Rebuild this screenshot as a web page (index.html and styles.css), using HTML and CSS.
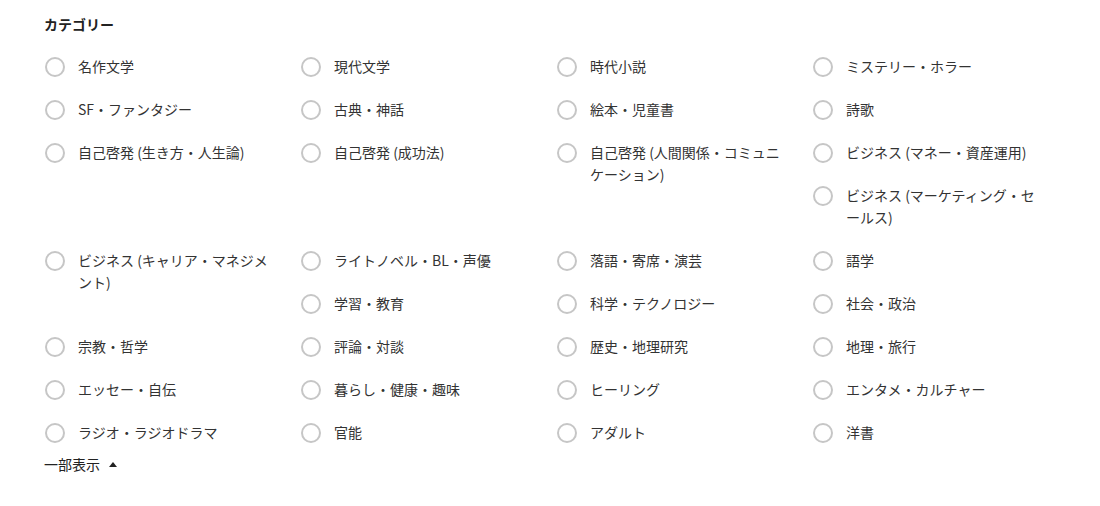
FILE: index.html
```html
<!DOCTYPE html>
<html lang="ja">
<head>
<meta charset="utf-8">
<link rel="stylesheet" href="styles.css">
</head>
<body>
<div class="filter">
  <h3 class="filter-title">カテゴリー</h3>
  <div class="options">
    <label class="item"><span class="radio"></span><span class="text">名作文学</span></label>
    <label class="item"><span class="radio"></span><span class="text">現代文学</span></label>
    <label class="item"><span class="radio"></span><span class="text">時代小説</span></label>
    <label class="item"><span class="radio"></span><span class="text">ミステリー・ホラー</span></label>
    <label class="item"><span class="radio"></span><span class="text">SF・ファンタジー</span></label>
    <label class="item"><span class="radio"></span><span class="text">古典・神話</span></label>
    <label class="item"><span class="radio"></span><span class="text">絵本・児童書</span></label>
    <label class="item"><span class="radio"></span><span class="text">詩歌</span></label>
    <label class="item"><span class="radio"></span><span class="text">自己啓発 (生き方・人生論)</span></label>
    <label class="item"><span class="radio"></span><span class="text">自己啓発 (成功法)</span></label>
    <label class="item"><span class="radio"></span><span class="text">自己啓発 (人間関係・コミュニケーション)</span></label>
    <label class="item"><span class="radio"></span><span class="text">ビジネス (マネー・資産運用)</span></label>
    <label class="item"><span class="radio"></span><span class="text">ビジネス (マーケティング・セールス)</span></label>
    <label class="item"><span class="radio"></span><span class="text">ビジネス (キャリア・マネジメント)</span></label>
    <label class="item"><span class="radio"></span><span class="text">ライトノベル・BL・声優</span></label>
    <label class="item"><span class="radio"></span><span class="text">落語・寄席・演芸</span></label>
    <label class="item"><span class="radio"></span><span class="text">語学</span></label>
    <label class="item"><span class="radio"></span><span class="text">学習・教育</span></label>
    <label class="item"><span class="radio"></span><span class="text">科学・テクノロジー</span></label>
    <label class="item"><span class="radio"></span><span class="text">社会・政治</span></label>
    <label class="item"><span class="radio"></span><span class="text">宗教・哲学</span></label>
    <label class="item"><span class="radio"></span><span class="text">評論・対談</span></label>
    <label class="item"><span class="radio"></span><span class="text">歴史・地理研究</span></label>
    <label class="item"><span class="radio"></span><span class="text">地理・旅行</span></label>
    <label class="item"><span class="radio"></span><span class="text">エッセー・自伝</span></label>
    <label class="item"><span class="radio"></span><span class="text">暮らし・健康・趣味</span></label>
    <label class="item"><span class="radio"></span><span class="text">ヒーリング</span></label>
    <label class="item"><span class="radio"></span><span class="text">エンタメ・カルチャー</span></label>
    <label class="item"><span class="radio"></span><span class="text">ラジオ・ラジオドラマ</span></label>
    <label class="item"><span class="radio"></span><span class="text">官能</span></label>
    <label class="item"><span class="radio"></span><span class="text">アダルト</span></label>
    <label class="item"><span class="radio"></span><span class="text">洋書</span></label>
  </div>
  <div class="toggle">一部表示<span class="caret"></span></div>
</div>
</body>
</html>
```

FILE: styles.css
```css
html, body {
  margin: 0;
  padding: 0;
  background: #ffffff;
}

body {
  font-family: "Noto Sans CJK JP", "Noto Sans", "Liberation Sans", sans-serif;
  color: #333333;
  font-size: 14px;
}

.filter {
  padding: 14px 32px 0 44px;
}

.filter-title {
  margin: 0;
  font-size: 14px;
  line-height: 20px;
  font-weight: 700;
  color: #222222;
}

.options {
  margin-top: 11px;
}

.item {
  float: left;
  box-sizing: border-box;
  width: 256px;
  display: flex;
  align-items: flex-start;
  padding: 10px 26px 11px 0;
  line-height: 22px;
  cursor: pointer;
}

.radio {
  flex: none;
  box-sizing: border-box;
  width: 20px;
  height: 20px;
  margin: 2px 13px 0 1px;
  border: 2px solid #c6c6c6;
  border-radius: 50%;
  background: #ffffff;
}

.text {
  flex: 1;
  min-width: 0;
}

.toggle {
  clear: both;
  margin-top: 4px;
  line-height: 20px;
  color: #222222;
  display: flex;
  align-items: center;
}

.caret {
  display: inline-block;
  width: 0;
  height: 0;
  margin-left: 9px;
  border-left: 4px solid transparent;
  border-right: 4px solid transparent;
  border-bottom: 5px solid #222222;
}
```
